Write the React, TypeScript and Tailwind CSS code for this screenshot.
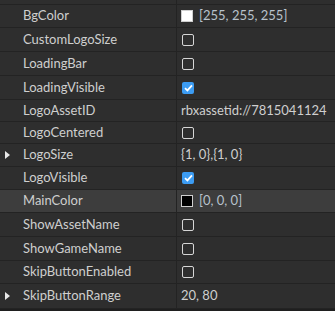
type Prop = {
  name: string;
  kind: "color" | "check" | "text";
  value?: string;
  checked?: boolean;
  swatch?: string;
  arrow?: boolean;
  active?: boolean;
};

const props: Prop[] = [
  { name: "BgColor", kind: "color", value: "[255, 255, 255]", swatch: "bg-white" },
  { name: "CustomLogoSize", kind: "check" },
  { name: "LoadingBar", kind: "check" },
  { name: "LoadingVisible", kind: "check", checked: true },
  { name: "LogoAssetID", kind: "text", value: "rbxassetid://7815041124" },
  { name: "LogoCentered", kind: "check" },
  { name: "LogoSize", kind: "text", value: "{1, 0},{1, 0}", arrow: true },
  { name: "LogoVisible", kind: "check", checked: true },
  { name: "MainColor", kind: "color", value: "[0, 0, 0]", swatch: "bg-black", active: true },
  { name: "ShowAssetName", kind: "check" },
  { name: "ShowGameName", kind: "check" },
  { name: "SkipButtonEnabled", kind: "check" },
  { name: "SkipButtonRange", kind: "text", value: "20, 80", arrow: true },
];

// rows drift between 23 and 24px in the capture
const heights = ["h-[23px]", "h-[24px]", "h-[24px]", "h-[24px]", "h-[22px]", "h-[22px]", "h-[23px]", "h-[23px]", "h-[23px]", "h-[24px]", "h-[24px]", "h-[23px]", "h-[25px]"];

function Check({ on }: { on?: boolean }) {
  if (on)
    return (
      <div className="w-[12px] h-[12px] rounded-[2px] bg-[#3c9cf3] flex items-center justify-center">
        <svg width="9" height="8" viewBox="0 0 9 8">
          <path d="M1 4.2 L3.4 6.4 L8 1.4" stroke="white" strokeWidth="1.8" fill="none" />
        </svg>
      </div>
    );
  return <div className="w-[12px] h-[12px] rounded-[2px] border border-[#d6d6d6]" />;
}

export default function App() {
  return (
    <main
      className="w-[335px] h-[311px] bg-[#2e2e2e] text-[#cfcfcf] overflow-hidden flex flex-col"
      style={{ fontFamily: 'Lato, "Liberation Sans", sans-serif' }}
    >
      <div className="h-[4px] flex shrink-0">
        <div className="w-[176px]" />
        <div className="border-l border-[#232323]" />
      </div>
      {props.map((p, i) => (
        <div
          key={p.name}
          className={`${heights[i]} shrink-0 flex border-t border-[#232323] text-[13px] ${p.active ? "bg-[#3d3d3d]" : ""}`}
        >
          <div className="w-[176px] flex items-center">
            <div className="w-[23px] flex justify-center pr-[8px]">
              {p.arrow && (
                <svg width="5" height="8" viewBox="0 0 5 8">
                  <path d="M0 0 L5 4 L0 8 Z" fill="#e8e8e8" />
                </svg>
              )}
            </div>
            <span>{p.name}</span>
          </div>
          <div className="flex-1 flex items-center border-l border-[#232323] pl-[4px]">
            {p.kind === "check" && (
              <div className="pl-[1px]">
                <Check on={p.checked} />
              </div>
            )}
            {p.kind === "color" && (
              <div className="flex items-center gap-[6px]">
                <div className={`w-[12px] h-[12px] border border-[#cfcfcf] ${p.swatch}`} />
                <span className="text-[#b8c2cc]">{p.value}</span>
              </div>
            )}
            {p.kind === "text" && <span>{p.value}</span>}
          </div>
        </div>
      ))}
      <div className="flex-1 border-t border-[#232323] bg-[#1f1f1f]" />
    </main>
  );
}
